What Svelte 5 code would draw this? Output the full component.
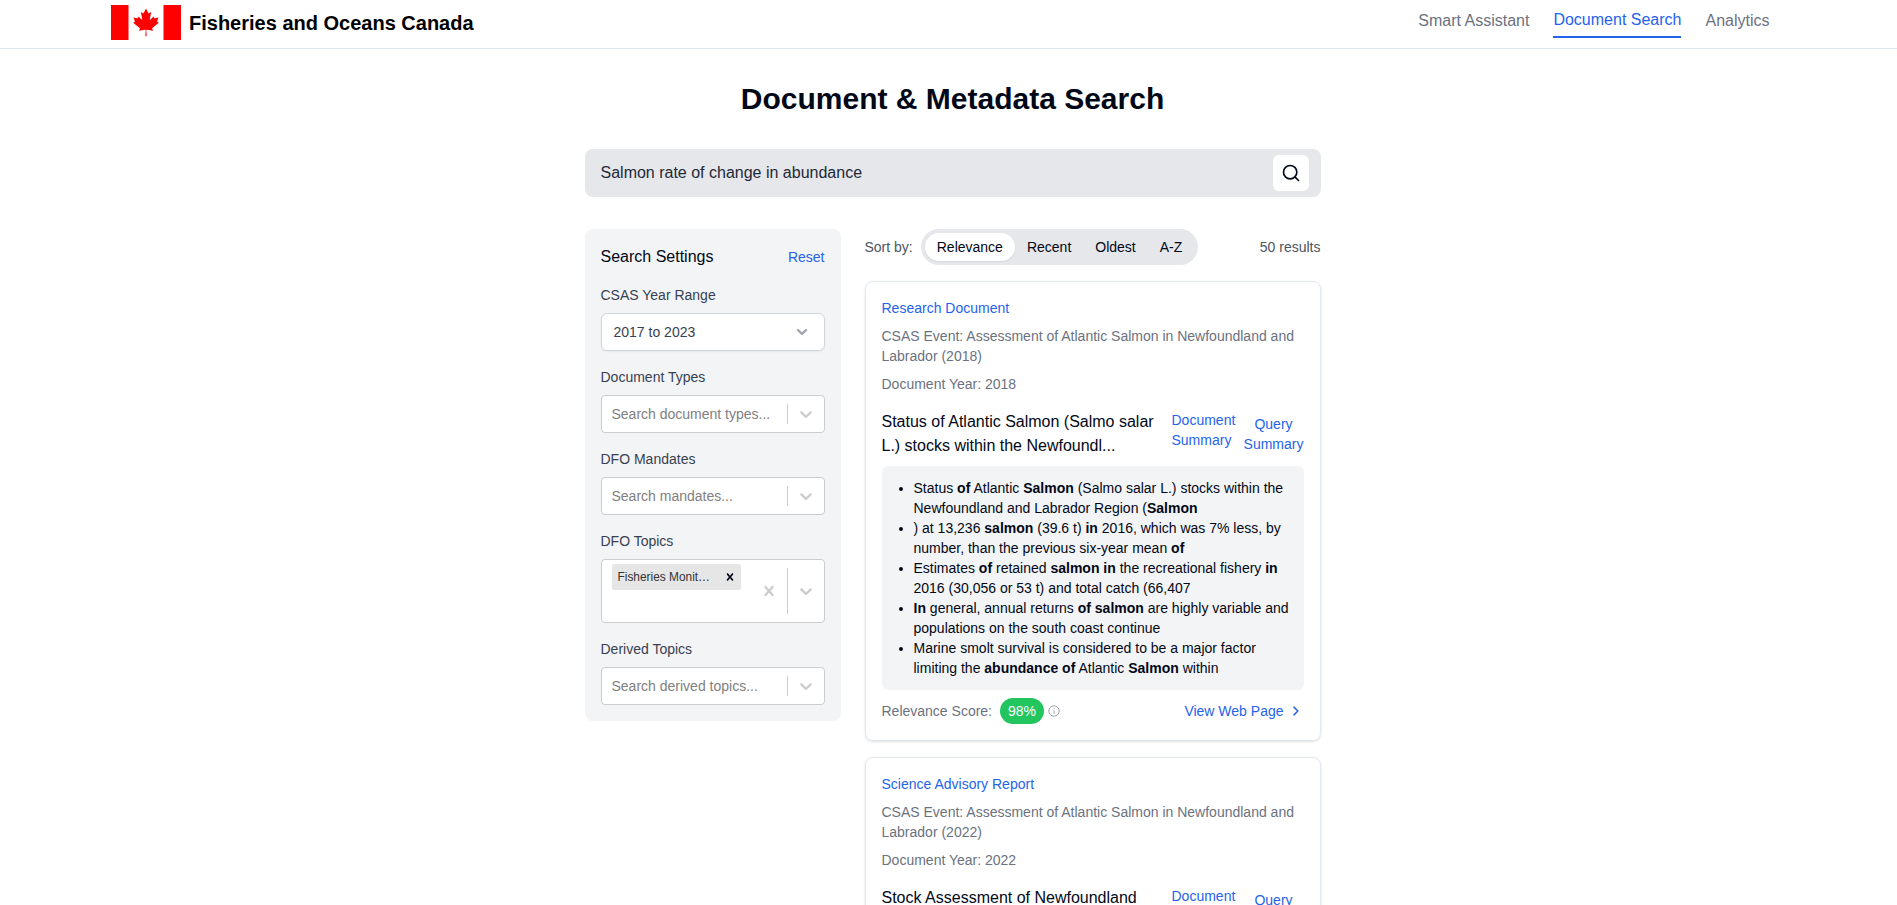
<script>
  const sorts = ['Relevance', 'Recent', 'Oldest', 'A-Z'];
  let active = $state('Relevance');
  let query = $state('Salmon rate of change in abundance');

  // Each highlight alternates plain and emphasised runs of text.
  const cards = [
    {
      type: 'Research Document',
      event: 'Assessment of Atlantic Salmon in Newfoundland and Labrador (2018)',
      year: 2018,
      title: ['Status of Atlantic Salmon (Salmo salar', 'L.) stocks within the Newfoundl...'],
      score: 98,
      highlights: [
        ['Status ', 'of', ' Atlantic ', 'Salmon', ' (Salmo salar L.) stocks within the Newfoundland and Labrador Region (', 'Salmon'],
        [') at 13,236 ', 'salmon', ' (39.6 t) ', 'in', ' 2016, which was 7% less, by number, than the previous six-year mean ', 'of'],
        ['Estimates ', 'of', ' retained ', 'salmon in', ' the recreational fishery ', 'in', ' 2016 (30,056 or 53 t) and total catch (66,407'],
        ['', 'In', ' general, annual returns ', 'of salmon', ' are highly variable and populations on the south coast continue'],
        ['Marine smolt survival is considered to be a major factor limiting the ', 'abundance of', ' Atlantic ', 'Salmon', ' within']
      ]
    },
    {
      type: 'Science Advisory Report',
      event: 'Assessment of Atlantic Salmon in Newfoundland and Labrador (2022)',
      year: 2022,
      title: ['Stock Assessment of Newfoundland'],
      score: null,
      highlights: []
    }
  ];
</script>

{#snippet arrow()}
  <svg class="arrow" width="20" height="20" viewBox="0 0 20 20" aria-hidden="true">
    <path d="M4.516 7.548c0.436-0.446 1.043-0.481 1.576 0l3.908 3.747 3.908-3.747c0.533-0.481 1.141-0.446 1.574 0 0.436 0.445 0.408 1.197 0 1.615-0.406 0.418-4.695 4.502-4.695 4.502-0.217 0.223-0.502 0.335-0.787 0.335s-0.57-0.112-0.789-0.335c0 0-4.287-4.084-4.695-4.502s-0.436-1.17 0-1.615z" />
  </svg>
{/snippet}

{#snippet cross(size)}
  <svg width={size} height={size} viewBox="0 0 20 20" aria-hidden="true">
    <path fill="currentColor" d="M14.348 14.849c-0.469 0.469-1.229 0.469-1.697 0l-2.651-3.030-2.651 3.029c-0.469 0.469-1.229 0.469-1.697 0-0.469-0.469-0.469-1.229 0-1.697l2.758-3.15-2.759-3.152c-0.469-0.469-0.469-1.228 0-1.697s1.228-0.469 1.697 0l2.652 3.031 2.651-3.031c0.469-0.469 1.228-0.469 1.697 0s0.469 1.229 0 1.697l-2.758 3.152 2.758 3.15c0.469 0.469 0.469 1.229 0 1.698z" />
  </svg>
{/snippet}

{#snippet field(label, placeholder)}
  <div class="field">
    <span class="label">{label}</span>
    <div class="select">
      <span class="placeholder">{placeholder}</span>
      <span class="sep"></span>
      <span class="indicator">{@render arrow()}</span>
    </div>
  </div>
{/snippet}

<div class="page">
  <header>
    <div class="brand">
      <svg class="flag" viewBox="0 0 70 35" width="70" height="35" role="img" aria-label="Flag of Canada">
        <rect width="70" height="35" fill="#fff" />
        <rect width="17.5" height="35" fill="#f00" />
        <rect x="52.5" width="17.5" height="35" fill="#f00" />
        <path fill="#f00" transform="translate(35 17.3) scale(.0069)" d="M-90 2030l45-863a95 95 0 0 0-111-98l-859 151 116-320a65 65 0 0 0-20-73l-941-762 212-99a65 65 0 0 0 34-79l-186-572 542 115a65 65 0 0 0 73-38l105-247 423 454a65 65 0 0 0 111-57l-204-1052 327 189a65 65 0 0 0 91-27L0-2000l332 652a65 65 0 0 0 91 27l327-189-204 1052a65 65 0 0 0 111 57l423-454 105 247a65 65 0 0 0 73 38l542-115-186 572a65 65 0 0 0 34 79l212 99-941 762a65 65 0 0 0-20 73l116 320-859-151a95 95 0 0 0-111 98l45 863z" />
      </svg>
      <span>Fisheries and Oceans Canada</span>
    </div>
    <nav>
      <a href="#assistant">Smart Assistant</a>
      <a href="#search" class="current">Document Search</a>
      <a href="#analytics">Analytics</a>
    </nav>
  </header>

  <main>
    <h1>Document &amp; Metadata Search</h1>

    <div class="searchbar">
      <input bind:value={query} aria-label="Search" />
      <button aria-label="Submit search">
        <svg width="20" height="20" viewBox="0 0 24 24" fill="none" stroke="currentColor" stroke-width="2" stroke-linecap="round" stroke-linejoin="round">
          <circle cx="11" cy="11" r="8" />
          <path d="m21 21-4.3-4.3" />
        </svg>
      </button>
    </div>

    <div class="columns">
      <aside>
        <div class="settings-head">
          <h2>Search Settings</h2>
          <button class="link">Reset</button>
        </div>
        <div class="field">
          <span class="label">CSAS Year Range</span>
          <div class="range">
            <span>2017 to 2023</span>
            <svg width="20" height="20" viewBox="0 0 20 20" aria-hidden="true">
              <path fill="#9ca3af" stroke="#9ca3af" stroke-width=".3" fill-rule="evenodd" clip-rule="evenodd" d="M5.293 7.293a1 1 0 011.414 0L10 10.586l3.293-3.293a1 1 0 111.414 1.414l-4 4a1 1 0 01-1.414 0l-4-4a1 1 0 010-1.414z" />
            </svg>
          </div>
        </div>
        {@render field('Document Types', 'Search document types...')}
        {@render field('DFO Mandates', 'Search mandates...')}
        <div class="field">
          <span class="label">DFO Topics</span>
          <div class="select tall">
            <div class="chips">
              <div class="chip"><span>Fisheries Monit…</span>{@render cross(14)}</div>
            </div>
            <span class="indicator clear">{@render cross(20)}</span>
            <span class="sep"></span>
            <span class="indicator">{@render arrow()}</span>
          </div>
        </div>
        {@render field('Derived Topics', 'Search derived topics...')}
      </aside>

      <section>
        <div class="sortrow">
          <span>Sort by:</span>
          <div class="pills">
            {#each sorts as s}
              <button class:on={active === s} onclick={() => (active = s)}>{s}</button>
            {/each}
          </div>
          <span class="count">50 results</span>
        </div>

        {#each cards as c}
          <article>
            <p class="type">{c.type}</p>
            <p class="meta">CSAS Event: {c.event}</p>
            <p class="meta">Document Year: {c.year}</p>
            <div class="titlerow">
              <h3>{#each c.title as line}<span>{line}</span>{/each}</h3>
              <button class="link doc">Document Summary</button>
              <button class="link query">Query Summary</button>
            </div>
            {#if c.highlights.length}
              <ul>
                {#each c.highlights as runs}
                  <li>{#each runs as run, i}{#if i % 2}<b>{run}</b>{:else}{run}{/if}{/each}</li>
                {/each}
              </ul>
              <div class="foot">
                <span>Relevance Score:</span>
                <span class="badge">{c.score}%</span>
                <svg class="info" width="12" height="12" viewBox="0 0 12 12" fill="none" stroke="#9ca3af" aria-hidden="true">
                  <circle cx="6" cy="6" r="5.2" />
                  <path d="M6 5.3v3.3M6 3.2v1" />
                </svg>
                <a href="#view">
                  View Web Page
                  <svg width="16" height="16" viewBox="0 0 24 24" fill="none" stroke="currentColor" stroke-width="2.2" stroke-linecap="round" stroke-linejoin="round"><path d="m9 6.2 5.8 5.8L9 17.8" /></svg>
                </a>
              </div>
            {/if}
          </article>
        {/each}
      </section>
    </div>
  </main>
</div>

<style>
  :global(body) { margin: 0; background: #fff; }
  .page {
    height: 100vh;
    overflow: hidden;
    font: 14px/20px "Liberation Sans", Arial, sans-serif;
    color: #020817;
  }
  .page :global(*) { box-sizing: border-box; }
  h1, h2, h3, p, ul { margin: 0; font-weight: 400; }
  button { font: inherit; color: inherit; border: 0; background: none; padding: 0; cursor: pointer; }
  a { text-decoration: none; color: inherit; }
  svg { display: block; flex: none; }

  header {
    height: 49px;
    display: flex;
    justify-content: space-between;
    align-items: flex-start;
    padding: 5px 127.5px 0 111px;
    border-bottom: 1px solid #dce6f0;
  }
  .brand { display: flex; align-items: center; gap: 8px; font-size: 20px; font-weight: 700; color: #000; }
  nav { display: flex; align-items: flex-start; gap: 24px; padding-top: 3px; font-size: 16px; line-height: 24px; color: #6b7280; }
  nav a { padding-top: 1px; }
  nav .current { padding-top: 0; color: #2563eb; padding-bottom: 4px; border-bottom: 2px solid #2563eb; }

  main { width: 736px; margin-left: 584.5px; }
  h1 { padding-top: 32px; font-size: 30px; line-height: 36px; font-weight: 700; text-align: center; }
  .searchbar {
    display: flex;
    align-items: center;
    height: 48px;
    margin-top: 32px;
    padding: 0 12px 0 16px;
    border-radius: 8px;
    background: #e5e7eb;
  }
  input { flex: 1; border: 0; padding: 0; outline: 0; background: none; font: 16px/24px "Liberation Sans", Arial, sans-serif; color: #1f2937; }
  .searchbar button { width: 36px; height: 36px; border-radius: 6px; background: #fff; display: grid; place-items: center; }

  .columns { display: flex; align-items: flex-start; gap: 24px; margin-top: 32px; }
  aside { width: 256px; padding: 16px; border-radius: 8px; background: #f3f4f6; display: flex; flex-direction: column; gap: 16px; }
  .settings-head { display: flex; justify-content: space-between; align-items: center; }
  h2 { font-size: 16px; line-height: 24px; }
  .link { color: #2563eb; }
  .label { display: block; margin-bottom: 8px; color: #374151; }
  .range {
    display: flex;
    justify-content: space-between;
    align-items: center;
    height: 38px;
    padding: 0 12px;
    border: 1px solid #d1d5db;
    border-radius: 6px;
    background: #fff;
    color: #374151;
    box-shadow: 0 1px 2px rgba(0, 0, 0, .05);
  }
  .select { display: flex; height: 38px; border: 1px solid #ccc; border-radius: 4px; background: #fff; }
  .tall { height: 64px; }
  .placeholder { flex: 1; padding-left: 10px; align-self: center; color: #808080; }
  .sep { width: 1px; margin: 8px 0; background: #ccc; }
  .indicator { display: flex; align-items: center; padding: 0 8px; color: #ccc; }
  .clear { padding: 0 8px; }
  .arrow { fill: currentColor; }
  .chips { flex: 1; padding: 4px 0 0 10px; }
  .chip { width: 129px; height: 26px; display: flex; align-items: center; justify-content: space-between; padding: 0 4px 0 6px; border-radius: 2px; background: #e6e6e6; font-size: 11.9px; color: #333; }
  .chip :global(svg) { color: #020817; }

  section { width: 456px; }
  .sortrow { display: flex; align-items: center; height: 36px; gap: 8px; color: #4b5563; margin-bottom: 16px; }
  .pills { display: flex; padding: 4px; border-radius: 18px; background: #e5e7eb; color: #020817; }
  .pills button { height: 28px; padding: 0 12px; border-radius: 14px; }
  .pills .on { background: #fff; box-shadow: 0 1px 2px rgba(0, 0, 0, .07); }
  .count { margin-left: auto; }

  article {
    padding: 16px;
    margin-bottom: 16px;
    border: 1px solid #e2e8f0;
    border-radius: 8px;
    box-shadow: 0 1px 3px rgba(0, 0, 0, .1), 0 1px 2px -1px rgba(0, 0, 0, .1);
  }
  .type { color: #2563eb; }
  .meta { margin-top: 8px; color: #6b7280; }
  .titlerow { display: flex; align-items: center; margin-top: 16px; height: 48px; }
  h3 { flex: 1; align-self: flex-start; font-size: 16px; line-height: 24px; }
  h3 span { display: block; white-space: nowrap; }
  .doc { width: 64px; align-self: flex-start; text-align: left; margin-right: 8px; }
  .query { width: 60px; text-align: center; }
  ul { margin-top: 8px; padding: 12px 12px 12px 32px; border-radius: 6px; background: #f3f4f6; }
  b { font-weight: 700; }
  .foot { display: flex; align-items: center; height: 26px; margin-top: 8px; color: #6b7280; }
  .badge { margin: 0 4px 0 8px; height: 26px; padding: 3px 8px; border-radius: 13px; background: #22c55e; color: #fff; }
  .foot a { display: flex; align-items: center; gap: 4px; margin-left: auto; color: #2563eb; }
</style>
